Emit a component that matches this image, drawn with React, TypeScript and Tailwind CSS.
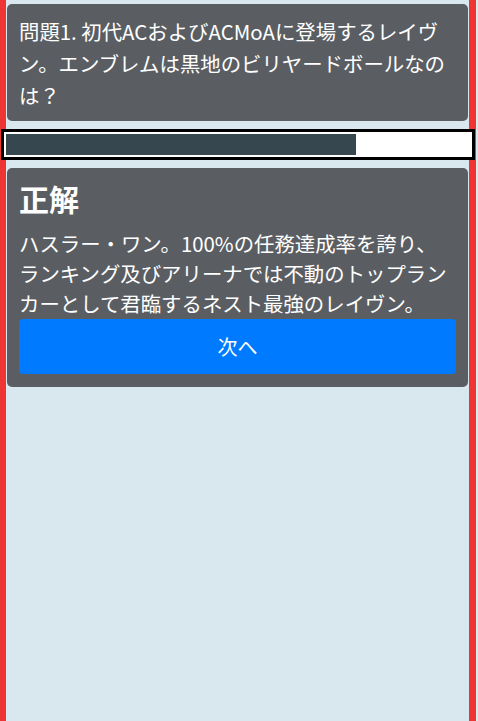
import React from "react";

export default function App() {
  const font = { fontFamily: '"Noto Sans CJK JP", "Noto Sans", sans-serif' };
  return (
    <div className="min-h-screen w-full bg-[#dbe8ee]" style={font}>
      <div className="min-h-screen w-[476px] border-l-[6px] border-r-[7px] border-[#ef3434] bg-[#d9e8ee] pt-1">
        <div className="mx-px rounded-[5px] bg-[#5a5e63] px-3 pb-[10px] pt-[11px] text-[20.4px] leading-[32px] text-white">
          問題1. 初代ACおよびACMoAに登場するレイヴ
          <br />
          ン。エンブレムは黒地のビリヤードボールなの
          <br />
          は？
        </div>

        <div className="-ml-[5px] -mr-[6px] mt-2 border-[3px] border-black bg-white p-[2px]">
          <div className="h-[21px] w-[350px] bg-[#37474f]" />
        </div>

        <div className="mx-px mt-2 rounded-[5px] bg-[#5a5e63] px-3 pb-[13px] pt-3 text-white">
          <div className="text-[30px] font-bold leading-[36px]">正解</div>
          <div className="mt-3 text-[20.4px] leading-[30px]">
            ハスラー・ワン。100%の任務達成率を誇り、
            <br />
            ランキング及びアリーナでは不動のトップラン
            <br />
            カーとして君臨するネスト最強のレイヴン。
          </div>
          <button className="mt-px flex h-[55px] w-full items-center justify-center rounded-[4px] bg-[#007bff] text-[20px] text-white">
            次へ
          </button>
        </div>
      </div>
    </div>
  );
}
